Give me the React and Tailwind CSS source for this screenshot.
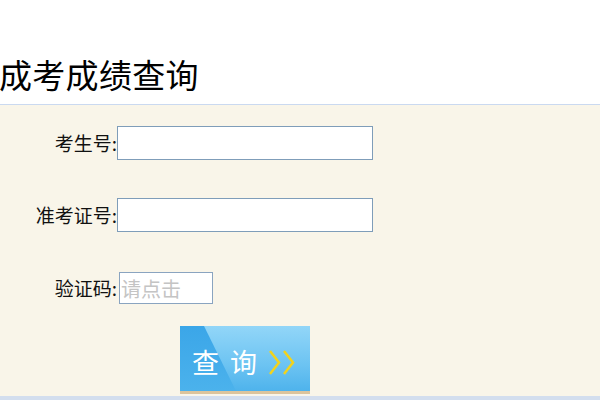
export default function App() {
  const font = { fontFamily: '"Noto Sans CJK SC", "Noto Sans", sans-serif' };

  return (
    <div className="w-[600px] h-[400px] bg-white overflow-hidden" style={font}>
      {/* 标题 */}
      <div className="h-[104px] flex items-end pb-[10px]">
        <h1 className="text-[33px] leading-[40px] font-normal text-black tracking-[0.3px] -ml-[1px]">
          成考成绩查询
        </h1>
      </div>

      {/* 表单区 */}
      <div className="h-[292px] bg-[#f9f5e9] border-t border-[#cad9f0]">
        <div className="pt-[21px]">
          <div className="flex items-center h-[34px]">
            <label className="w-[117px] text-right text-[19px] text-[#111]">考生号:</label>
            <input
              type="text"
              className="w-[256px] h-[34px] bg-white border border-[#7f9db9] outline-none"
            />
          </div>

          <div className="flex items-center h-[34px] mt-[38px]">
            <label className="w-[117px] text-right text-[19px] text-[#111]">准考证号:</label>
            <input
              type="text"
              className="w-[256px] h-[34px] bg-white border border-[#7f9db9] outline-none"
            />
          </div>

          <div className="flex items-center h-[32px] mt-[40px]">
            <label className="w-[119px] text-right text-[19px] text-[#111] pr-[2px]">验证码:</label>
            <input
              type="text"
              placeholder="请点击"
              className="w-[94px] h-[32px] bg-white border border-[#8aa4c0] outline-none text-[20px] px-[1px] placeholder:text-[#c4c4c4]"
            />
          </div>

          {/* 查询按钮 */}
          <div className="ml-[180px] mt-[22px] w-[130px]">
            <button className="relative w-[130px] h-[65px] overflow-hidden block">
              <svg className="absolute inset-0" width="130" height="65" viewBox="0 0 130 65">
                <defs>
                  <linearGradient id="dark" x1="0" y1="0" x2="0" y2="1">
                    <stop offset="0" stopColor="#3ba6e8" />
                    <stop offset="1" stopColor="#4bb2ec" />
                  </linearGradient>
                  <linearGradient id="light" x1="0" y1="0" x2="0" y2="1">
                    <stop offset="0" stopColor="#92d6f8" />
                    <stop offset="0.6" stopColor="#6cc3f2" />
                    <stop offset="1" stopColor="#4eb3ec" />
                  </linearGradient>
                </defs>
                <rect width="130" height="65" fill="url(#dark)" />
                <polygon points="24,0 130,0 130,65 56,65" fill="url(#light)" />
                <polyline points="90,25 99,36.5 90,48" fill="none" stroke="#f2d31c" strokeWidth="2.5" />
                <polyline points="104,25 113,36.5 104,48" fill="none" stroke="#f2d31c" strokeWidth="2.5" />
              </svg>
              <span className="absolute left-[12px] top-[20px] text-[27px] leading-[32px] text-white tracking-[11px]">
                查询
              </span>
            </button>
            <div className="h-[3px] bg-[#dcc49c]" />
          </div>
        </div>
      </div>
      <div className="h-[4px] bg-[#d3deee]" />
    </div>
  );
}
